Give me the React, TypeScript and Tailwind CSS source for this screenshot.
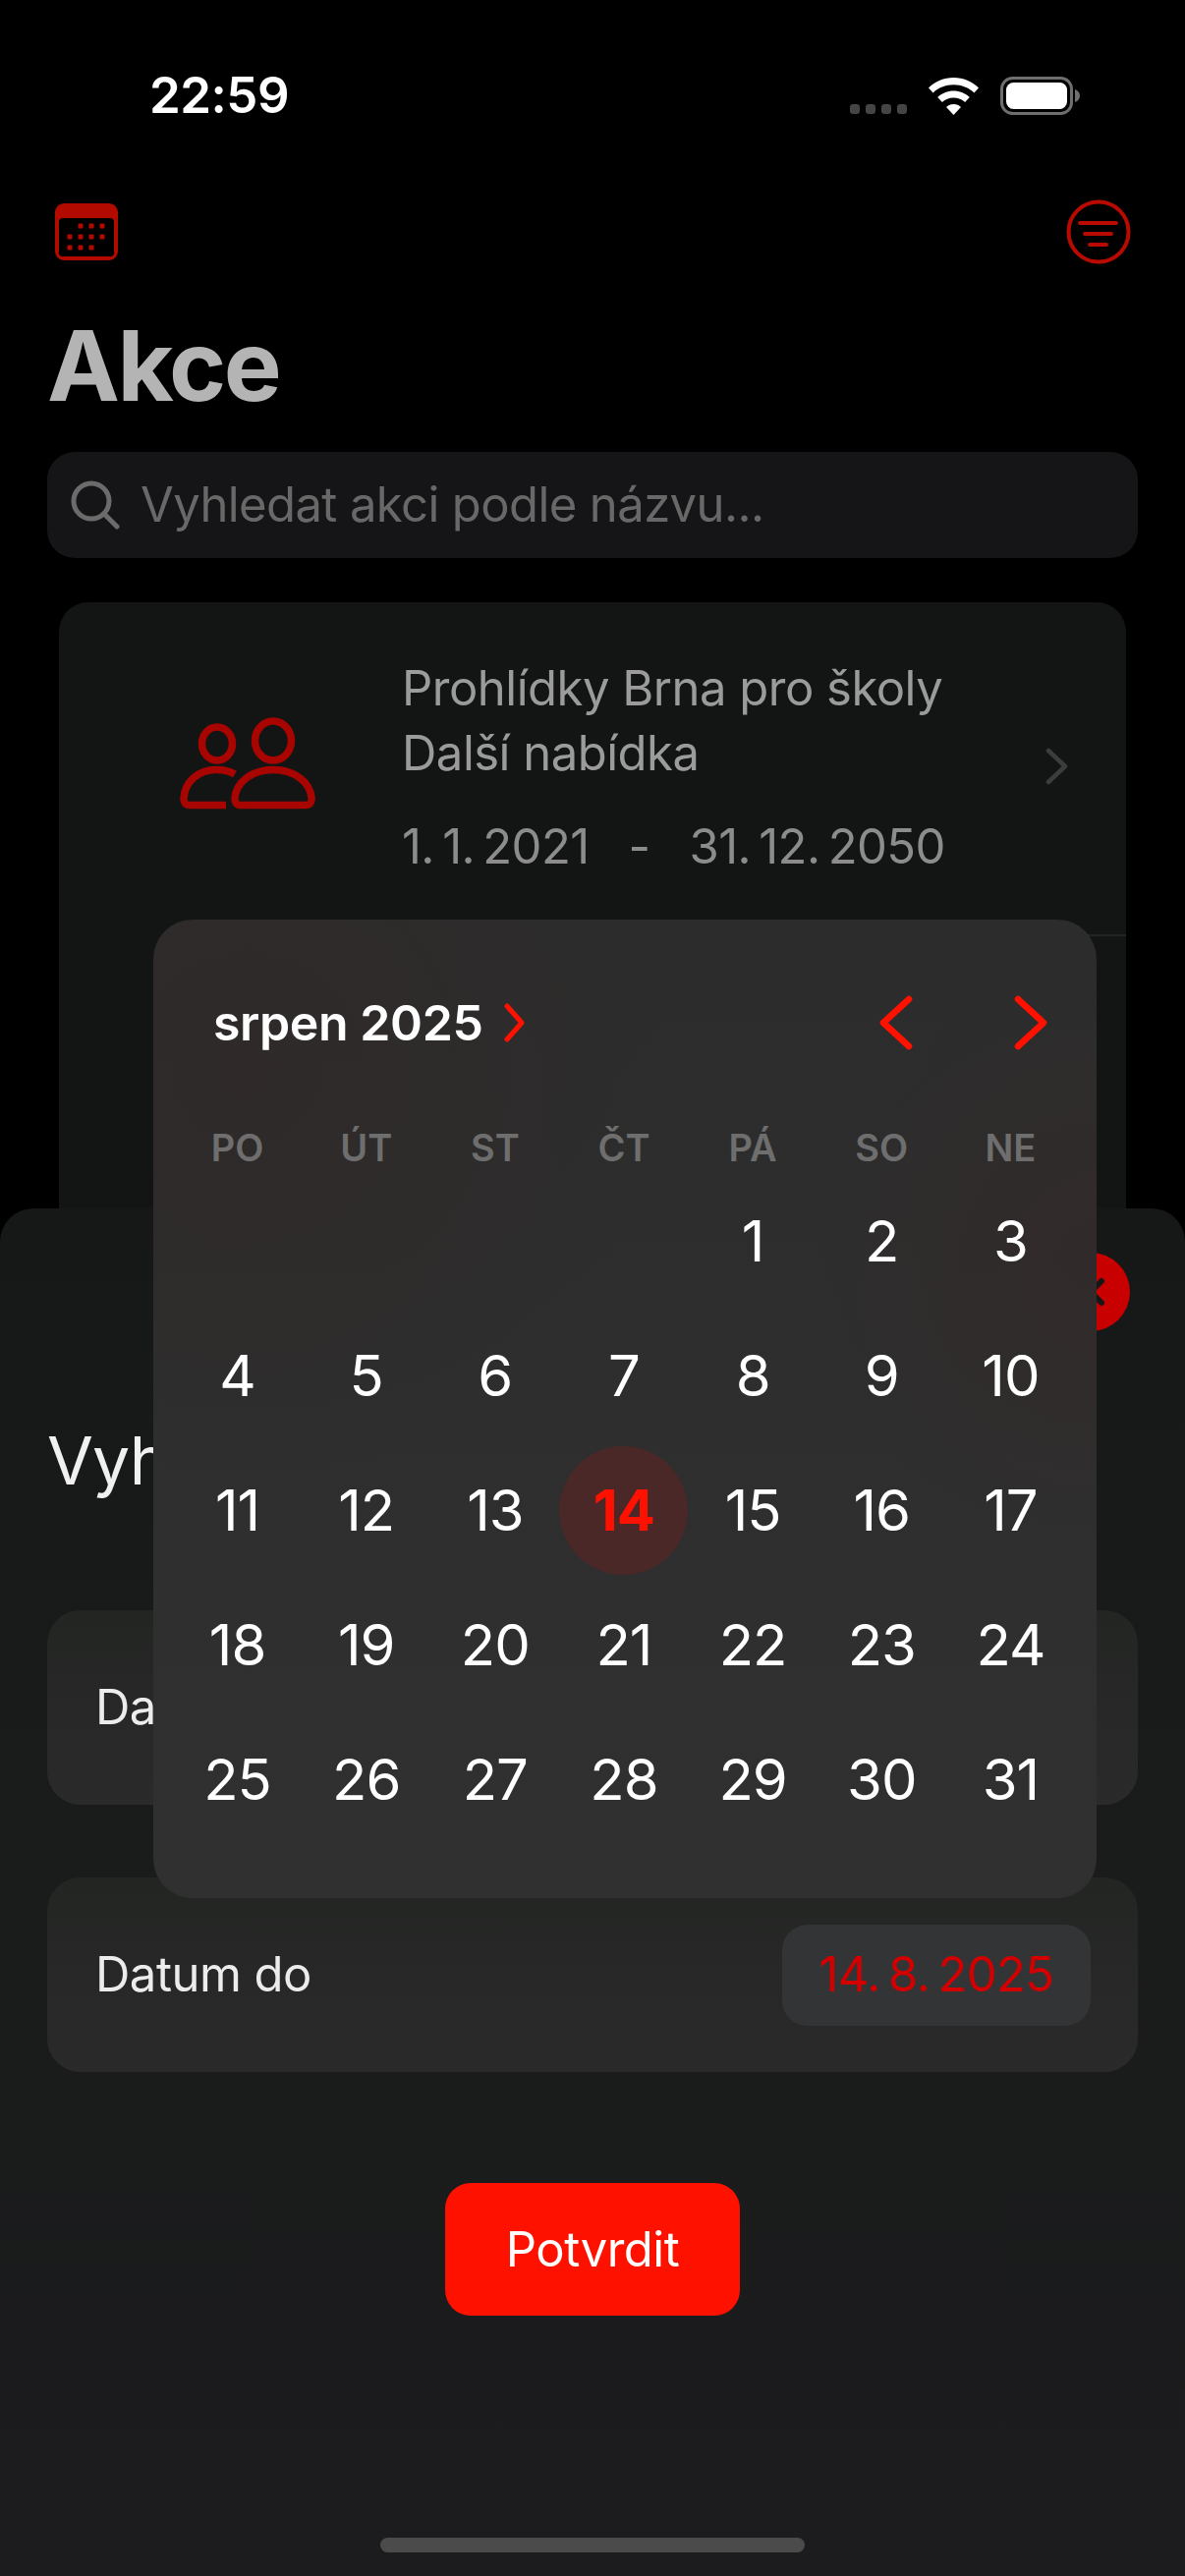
import React from "react";

const firstWeek = [1, 2, 3];
const weeks = [
  [4, 5, 6, 7, 8, 9, 10],
  [11, 12, 13, 14, 15, 16, 17],
  [18, 19, 20, 21, 22, 23, 24],
  [25, 26, 27, 28, 29, 30, 31],
];
const dayNames = ["PO", "ÚT", "ST", "ČT", "PÁ", "SO", "NE"];

function StatusBar() {
  return (
    <div className="flex h-[196px] items-start justify-between pt-[71px] pl-[152px] pr-[106px]">
      <span className="text-[51px] leading-[52px] font-semibold tracking-[-0.5px] text-white">22:59</span>
      <div className="flex items-start">
        <div className="mt-[35px] flex gap-[6px]">
          {[0, 1, 2, 3].map((i) => (
            <div key={i} className="h-[10px] w-[10px] rounded-[3px] bg-[#444444]" />
          ))}
        </div>
        <svg className="mt-[8px] ml-[22px]" width="51" height="38" viewBox="0 0 51 38">
          <path d="M25.5 0C15.6 0 6.8 3.9 0 10.4l4.6 5C10 10.200 17.300 7.200 25.500 7.200S41 10.200 46.400 15.400l4.600-5C44.200 3.900 35.400 0 25.500 0Z" fill="#fff" />
          <path d="M25.500 13.500c-6.300 0-12 2.500-16.300 6.500l4.700 5.100c3-2.800 7.100-4.500 11.600-4.500s8.600 1.700 11.600 4.500l4.700-5.100c-4.300-4-10-6.500-16.300-6.500Z" fill="#fff" />
          <path d="M25.500 27c-2.900 0-5.500 1.100-7.500 3l7.500 8 7.500-8c-2-1.900-4.600-3-7.500-3Z" fill="#fff" />
        </svg>
        <svg className="mt-[7px] ml-[22px]" width="82" height="40" viewBox="0 0 82 40">
          <rect x="1.500" y="1.500" width="71" height="36" rx="11" fill="none" stroke="#6e6e6e" strokeWidth="3" />
          <rect x="6" y="6" width="62" height="27" rx="7.500" fill="#fff" />
          <path d="M76 13c3 1 5 3.500 5 6.500S79 25 76 26Z" fill="#6e6e6e" />
        </svg>
      </div>
    </div>
  );
}

function NavRow() {
  return (
    <div className="flex h-[80px] items-center justify-between pl-[56px] pr-[55px]">
      <svg width="64" height="58" viewBox="0 0 64 58">
        <path fillRule="evenodd" clipRule="evenodd" d="M9 0h46a9 9 0 0 1 9 9v40a9 9 0 0 1-9 9H9a9 9 0 0 1-9-9V9a9 9 0 0 1 9-9Zm-1 15a4 4 0 0 0-4 4v30a4 4 0 0 0 5 5h46a4 4 0 0 0 5-5V19a4 4 0 0 0-4-4H8Z" fill="#b30a00" />
        {[
          [26, 23], [37, 23], [48, 23],
          [15, 34], [26, 34], [37, 34], [48, 34],
          [15, 45], [26, 45], [37, 45],
        ].map(([x, y]) => (
          <rect key={`${x}-${y}`} x={x - 2.500} y={y - 2.500} width="5" height="5" rx="1" fill="#b30a00" />
        ))}
      </svg>
      <svg width="66" height="66" viewBox="0 0 66 66" fill="none" stroke="#b80a00" strokeLinecap="round">
        <circle cx="33" cy="33" r="30.500" strokeWidth="4" />
        <path d="M14 24h37M19 35h27M24 46h17" strokeWidth="4" />
      </svg>
    </div>
  );
}

function PeopleIcon() {
  return (
    <svg width="140" height="94" viewBox="0 0 140 94" fill="none" stroke="#a80400" strokeWidth="7.500">
      <ellipse cx="38" cy="27" rx="15.500" ry="17" />
      <ellipse cx="95" cy="24" rx="18.500" ry="20" />
      <path d="M56 58c-5-3-12-4.500-19-4.500-18 0-32 12-33 29-.2 4 1.500 7 6 7h37" strokeLinecap="butt" />
      <path d="M95 53.500c-22 0-38 13-39 29-.2 4.500 2 7 6 7h66c4 0 6.500-2.500 6-7-1-16-17-29-39-29Z" />
    </svg>
  );
}

function EventList() {
  return (
    <div className="mx-[60px] mt-[45px] rounded-[30px] bg-[#131515]">
      <div className="flex h-[338px] items-center">
        <div className="flex w-[349px] justify-center pl-[36px] pb-[10px]">
          <PeopleIcon />
        </div>
        <div className="flex-1 pb-[4px] text-[#9b9b9b]">
          <div className="text-[49px] leading-[66px] tracking-[-0.5px]">Prohlídky Brna pro školy</div>
          <div className="text-[49px] leading-[66px] tracking-[-0.5px]">Další nabídka</div>
          <div className="mt-[32px] flex text-[49px] leading-[60px] tracking-[-0.6px] text-[#8c8c8c]">
            <span>1.&#8201;1.&#8201;2021</span>
            <span className="mx-[40px]">-</span>
            <span>31.&#8201;12.&#8201;2050</span>
          </div>
        </div>
        <svg className="mr-[58px] mb-[4px]" width="24" height="38" viewBox="0 0 24 38" fill="none" stroke="#3c3c3c" strokeWidth="4.500" strokeLinecap="round" strokeLinejoin="round">
          <path d="M3 3l17 16L3 35" />
        </svg>
      </div>
      <div className="ml-[349px] h-[1.500px] bg-[#232424]" />
      <div className="h-[400px]" />
    </div>
  );
}

function DateRow({ label }: { label: string }) {
  return (
    <div className="flex h-[198px] items-center justify-between rounded-[34px] bg-gradient-to-b from-[#232523] to-[#2a2a2a] pl-[49px] pr-[48px]">
      <span className="text-[49px] tracking-[-0.5px] text-[#ececec]">{label}</span>
      <div className="flex h-[103px] w-[314px] items-center justify-center rounded-[26px] bg-[#333436] text-[49px] tracking-[-0.6px] text-[#d40000]">
        14.&#8201;8.&#8201;2025
      </div>
    </div>
  );
}

function FilterSheet() {
  return (
    <div className="absolute inset-x-0 top-[1230px] bottom-0 rounded-t-[34px] bg-gradient-to-b from-[#161818] via-[#1a1b1b] to-[#1c1c1e] px-[48px]">
      <div className="absolute top-[45px] right-[56px] flex h-[80px] w-[80px] items-center justify-center rounded-full bg-[#c80000]">
        <svg width="40" height="40" viewBox="0 0 40 40" stroke="#161616" strokeWidth="6" strokeLinecap="round">
          <path d="M9 9l22 22M31 9L9 31" />
        </svg>
      </div>
      <div className="pt-[218px] whitespace-nowrap text-[68px] leading-[76px] tracking-[-0.8px] text-[#f0f0f0]">Vyhledat</div>
      <div className="mt-[115px]">
        <DateRow label="Datum od" />
      </div>
      <div className="mt-[74px]">
        <DateRow label="Datum do" />
      </div>
      <div className="mt-[113px] flex justify-center">
        <button className="h-[135px] w-[300px] rounded-[26px] bg-[#ff1100] text-[49px] tracking-[-0.5px] text-white">
          Potvrdit
        </button>
      </div>
      <div className="absolute bottom-[24px] left-[387px] h-[15px] w-[432px] rounded-full bg-[#4b4b4b]" />
    </div>
  );
}

function DayCell({ day }: { day?: number }) {
  if (day === 14) {
    return (
      <div className="flex h-[137px] items-center justify-center">
        <div className="flex h-[131px] w-[131px] items-center justify-center rounded-full bg-[#4a2828] text-[58px] font-bold tracking-[-1px] text-[#ff1100]">
          {day}
        </div>
      </div>
    );
  }
  return (
    <div className="flex h-[137px] items-center justify-center text-[58px] tracking-[-1px] text-white">
      {day}
    </div>
  );
}

function CalendarPopup() {
  return (
    <div className="absolute top-[936px] left-[156px] h-[996px] w-[960px] rounded-[40px] bg-[radial-gradient(circle_at_10%_15%,#2f2a29,transparent_35%),radial-gradient(circle_at_100%_35%,#322a2a,transparent_25%),linear-gradient(180deg,#2c2c2c,#303030)] pl-[20px] pr-[22px]">
      <div className="flex h-[204px] items-start pt-[85px] pl-[41px]">
        <span className="text-[50px] leading-[40px] font-semibold tracking-[-0.4px] text-white">srpen 2025</span>
        <svg className="ml-[20px]" width="24" height="40" viewBox="0 0 24 40" fill="none" stroke="#ff1100" strokeWidth="5" strokeLinecap="round" strokeLinejoin="round">
          <path d="M4 3l15 17L4 37" />
        </svg>
        <svg className="ml-auto -mt-[8px]" width="36" height="56" viewBox="0 0 36 56" fill="none" stroke="#ff1100" strokeWidth="6.500" strokeLinecap="round" strokeLinejoin="round">
          <path d="M31 4L5 28l26 24" />
        </svg>
        <svg className="mr-[27px] ml-[101px] -mt-[8px]" width="36" height="56" viewBox="0 0 36 56" fill="none" stroke="#ff1100" strokeWidth="6.500" strokeLinecap="round" strokeLinejoin="round">
          <path d="M5 4l26 24L5 52" />
        </svg>
      </div>
      <div className="grid h-[44px] grid-cols-7 items-center">
        {dayNames.map((name) => (
          <div key={name} className="text-center text-[38px] font-semibold text-[#6e6e6e]">
            {name}
          </div>
        ))}
      </div>
      <div className="mt-[11px] grid grid-cols-7">
        <div className="col-span-4" />
        {firstWeek.map((d) => (
          <DayCell key={d} day={d} />
        ))}
        {weeks.flat().map((d) => (
          <DayCell key={d} day={d} />
        ))}
      </div>
    </div>
  );
}

export default function App() {
  return (
    <div className="relative h-[2622px] w-[1206px] overflow-hidden bg-black font-['Inter',sans-serif]">
      <StatusBar />
      <NavRow />
      <h1 className="mt-[31px] pl-[48px] text-[99px] leading-[130px] font-bold tracking-[-2.5px] text-[#b4b4b4]">Akce</h1>
      <div className="mx-[48px] mt-[23px] flex h-[108px] items-center rounded-[28px] bg-[#151517] pl-[24px]">
        <svg width="50" height="50" viewBox="0 0 50 50" fill="none" stroke="#6b6b6b" strokeWidth="5" strokeLinecap="round">
          <circle cx="21" cy="21" r="18" />
          <path d="M34 34l13 13" />
        </svg>
        <span className="ml-[21px] text-[49px] tracking-[-0.6px] text-[#686868]">Vyhledat akci podle názvu...</span>
      </div>
      <EventList />
      <FilterSheet />
      <CalendarPopup />
    </div>
  );
}
